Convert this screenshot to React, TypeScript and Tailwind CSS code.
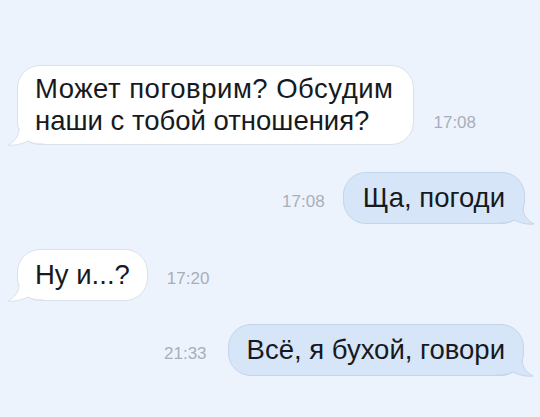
import type { ReactNode } from "react";

type Side = "in" | "out";

function Tail({ side }: { side: Side }) {
  const fill = side === "in" ? "#ffffff" : "#d6e6f8";
  const stroke = side === "in" ? "#dbe1e8" : "#c3d5ea";
  return (
    <svg
      width="40"
      height="32"
      viewBox="0 0 40 32"
      className={
        side === "in"
          ? "pointer-events-none absolute bottom-[-2px] left-[-10px]"
          : "pointer-events-none absolute bottom-[-2px] right-[-10px] -scale-x-100"
      }
    >
      <path d="M11,0 L11,14 C11,22 7,27 0,31 C8,32 16,29 20,27 C24,29 28,30 36,30 L11,4 Z" fill={fill} />
      <path
        d="M11,14 C11,22 7,27 0,31 C8,32 16,29 20,27 C24,29 28,30 36,30"
        fill="none"
        stroke={stroke}
        strokeWidth="1"
      />
    </svg>
  );
}

function Bubble({ side, children, className = "" }: { side: Side; children: ReactNode; className?: string }) {
  const colors =
    side === "in" ? "bg-white border-[#dbe1e8]" : "bg-[#d6e6f8] border-[#c3d5ea]";
  return (
    <div className={`relative rounded-[23px] border ${colors} ${className}`}>
      <Tail side={side} />
      <span className="relative z-10 block text-[27.5px] leading-[32px] text-[#161a1e]">{children}</span>
    </div>
  );
}

function Time({ children, className = "" }: { children: ReactNode; className?: string }) {
  return <span className={`mb-[12px] text-[17px] leading-[20px] text-[#a7afb9] ${className}`}>{children}</span>;
}

export default function App() {
  return (
    <div
      className="h-[417px] w-[540px] overflow-hidden bg-[#edf3fc] pt-[65px]"
      style={{ fontFamily: '"Liberation Sans", Arial, sans-serif' }}
    >
      <div className="flex items-end pl-[17px]">
        <Bubble side="in" className="py-[7px] pl-[17px] pr-[20px]">
          <span className="tracking-[0.5px]">Может поговрим? Обсудим</span>
          <br />
          наши с тобой отношения?
        </Bubble>
        <Time className="ml-[19px]">17:08</Time>
      </div>

      <div className="mt-[27px] flex items-end justify-end pr-[15px]">
        <Time className="mr-[18px]">17:08</Time>
        <Bubble side="out" className="px-[19px] py-[9px]">
          Ща, погоди
        </Bubble>
      </div>

      <div className="mt-[25px] flex items-end pl-[17px]">
        <Bubble side="in" className="py-[9px] pl-[17px] pr-[17px]">
          Ну и...?
        </Bubble>
        <Time className="ml-[19px]">17:20</Time>
      </div>

      <div className="mt-[23px] flex items-end justify-end pr-[16px]">
        <Time className="mr-[21px]">21:33</Time>
        <Bubble side="out" className="px-[18px] py-[9px]">
          Всё, я бухой, говори
        </Bubble>
      </div>
    </div>
  );
}
